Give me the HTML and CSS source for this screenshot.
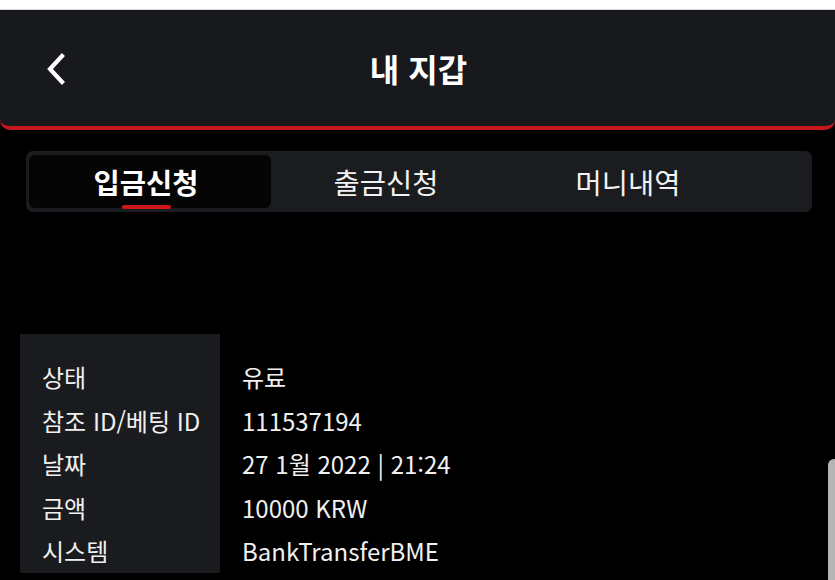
FILE: index.html
```html
<!DOCTYPE html>
<html lang="ko">
<head>
<meta charset="utf-8">
<title>내 지갑</title>
<link rel="stylesheet" href="styles.css">
</head>
<body>
<div class="topstrip"></div>
<header class="header">
  <div class="back">
    <svg width="22" height="32" viewBox="0 0 22 32"><path d="M17 3 L5 16 L17 29" fill="none" stroke="#fff" stroke-width="4.2" stroke-linecap="square"/></svg>
  </div>
  <h1 class="title">내 지갑</h1>
  <div></div>
</header>
<nav class="tabs">
  <div class="tab active">입금신청<span class="underline"></span></div>
  <div class="tab">출금신청</div>
  <div class="tab">머니내역</div>
</nav>
<section class="info">
  <div class="labels">
    <div class="row">상태</div>
    <div class="row">참조 ID/베팅 ID</div>
    <div class="row">날짜</div>
    <div class="row">금액</div>
    <div class="row">시스템</div>
  </div>
  <div class="values">
    <div class="row">유료</div>
    <div class="row">111537194</div>
    <div class="row">27 1월 2022 | 21:24</div>
    <div class="row">10000 KRW</div>
    <div class="row">BankTransferBME</div>
  </div>
</section>
<div class="scrollthumb"></div>
</body>
</html>
```
FILE: styles.css
```css
html, body {
  margin: 0;
  padding: 0;
  background: #000;
  height: 580px;
  overflow: hidden;
  font-family: "Noto Sans CJK KR", "Noto Sans", sans-serif;
  color: #fff;
}
.topstrip {
  height: 9px;
  background: #fff;
  border-bottom: 1px solid #d9d9d9;
}
.header {
  height: 116px;
  background: #18191c;
  border-bottom: 4px solid #c8161d;
  border-radius: 0 0 10px 10px;
  display: grid;
  grid-template-columns: 1fr auto 1fr;
  align-items: center;
}
.back {
  padding-left: 45px;
  display: flex;
  align-items: center;
  padding-top: 2px;
}
.title {
  margin: 0;
  font-size: 32px;
  font-weight: 700;
  padding-left: 2px;
}
.tabs {
  margin: 21px 0 0 26px;
  width: 780px;
  height: 53px;
  padding: 4px 3px;
  background: #1b1c1f;
  border-radius: 7px;
  display: flex;
}
.tab {
  position: relative;
  width: 242px;
  padding-right: 12px;
  box-sizing: border-box;
  display: flex;
  align-items: center;
  justify-content: center;
  font-size: 28.5px;
  color: #f2f2f2;
  border-radius: 6px;
}
.tab.active {
  background: #050505;
  font-weight: 700;
  color: #fff;
  padding-right: 8px;
}
.underline {
  position: absolute;
  left: 93px;
  bottom: -1px;
  width: 49px;
  height: 4px;
  border-radius: 2px;
  background: #d0161d;
}
.info {
  margin: 122px 0 0 20px;
  display: flex;
}
.labels {
  width: 200px;
  background: #1a1b1f;
  padding: 21px 0 0 22px;
  box-sizing: border-box;
  height: 239px;
}
.values {
  padding: 21px 0 0 22px;
}
.row {
  height: 43.5px;
  line-height: 43.5px;
  font-size: 24px;
  color: #f0f0f0;
  white-space: nowrap;
}
.scrollthumb {
  position: absolute;
  left: 828px;
  top: 459px;
  width: 8px;
  height: 125px;
  background: #b5b5b5;
  border-radius: 6px 0 0 0;
}
```
